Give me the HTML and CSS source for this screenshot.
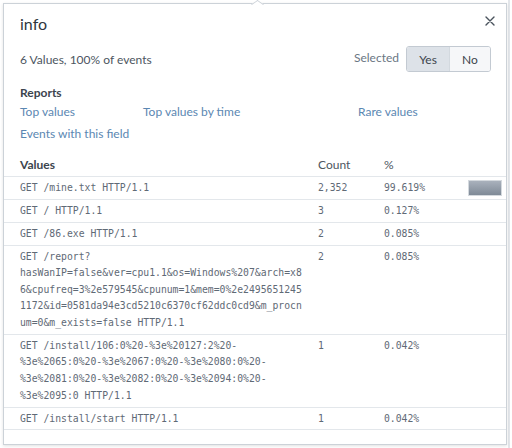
FILE: index.html
```html
<!DOCTYPE html>
<html>
<head>
<meta charset="utf-8">
<title>info</title>
<link rel="stylesheet" href="styles.css">
</head>
<body>
<div class="popover">
  <div class="arrow"></div>
  <div class="head">
    <h3 class="title">info</h3>
    <span class="close" aria-label="Close">
      <svg width="10" height="10" viewBox="0 0 10 10"><path d="M1 1L9 9M9 1L1 9" stroke="#4a535d" stroke-width="1.4" fill="none" stroke-linecap="round"/></svg>
    </span>
  </div>
  <div class="summary">
    <span class="meta">6 Values, 100% of events</span>
    <div class="selected">
      <span class="sel-label">Selected</span>
      <div class="toggle"><span class="opt on">Yes</span><span class="opt">No</span></div>
    </div>
  </div>
  <div class="reports">
    <div class="reports-title">Reports</div>
    <div class="links">
      <a class="link">Top values</a>
      <a class="link">Top values by time</a>
      <a class="link">Rare values</a>
      <a class="link">Events with this field</a>
    </div>
  </div>
  <table class="values">
    <colgroup><col class="c-val"><col class="c-count"><col class="c-pct"><col class="c-bar"></colgroup>
    <thead>
      <tr><th class="h-val">Values</th><th class="h-num">Count</th><th class="h-num">%</th><th></th></tr>
    </thead>
    <tbody>
      <tr><td class="v">GET /mine.txt HTTP/1.1</td><td class="n">2,352</td><td class="n">99.619%</td><td class="b"><div class="bar"></div></td></tr>
      <tr><td class="v">GET / HTTP/1.1</td><td class="n">3</td><td class="n">0.127%</td><td class="b"></td></tr>
      <tr><td class="v">GET /86.exe HTTP/1.1</td><td class="n">2</td><td class="n">0.085%</td><td class="b"></td></tr>
      <tr><td class="v">GET /report?<wbr>hasWanIP=false&amp;ver=cpu1.1&amp;os=Windows%207&amp;arch=x86&amp;cpufreq=3%2e579545&amp;cpunum=1&amp;mem=0%2e24956512451172&amp;id=0581da94e3cd5210c6370cf62ddc0cd9&amp;m_procnum=0&amp;m_exists=false HTTP/1.1</td><td class="n">2</td><td class="n">0.085%</td><td class="b"></td></tr>
      <tr><td class="v">GET /install/106:0%20-%3e%20127:2%20-%3e%2065:0%20-%3e%2067:0%20-%3e%2080:0%20-%3e%2081:0%20-%3e%2082:0%20-%3e%2094:0%20-%3e%2095:0 HTTP/1.1</td><td class="n">1</td><td class="n">0.042%</td><td class="b"></td></tr>
      <tr><td class="v">GET /install/start HTTP/1.1</td><td class="n">1</td><td class="n">0.042%</td><td class="b"></td></tr>
    </tbody>
  </table>
</div>
</body>
</html>
```

FILE: styles.css
```css
html, body {
  margin: 0;
  padding: 0;
}
body {
  width: 512px;
  height: 448px;
  overflow: hidden;
  position: relative;
  background: #ffffff linear-gradient(to right, transparent 508px, #e3e6ea 508px, #e3e6ea 510px, transparent 510px);
  font-family: Lato, "Liberation Sans", sans-serif;
  color: #3c444d;
}
.popover {
  position: absolute;
  left: 3px;
  top: 3px;
  width: 504px;
  height: 442px;
  box-sizing: border-box;
  border: 1px solid #ccd2d8;
  background: #fff;
  box-shadow: 0 1px 3px rgba(0, 0, 0, 0.12);
}
.arrow {
  position: absolute;
  left: 249px;
  top: -4.5px;
  width: 8px;
  height: 8px;
  background: #fff;
  border-left: 1px solid #ccd2d8;
  border-top: 1px solid #ccd2d8;
  transform: scaleY(0.7) rotate(45deg);
}
.head {
  display: flex;
  justify-content: space-between;
  align-items: center;
  padding: 8px 11px 0 16px;
  height: 24px;
}
.title {
  margin: 0;
  font-size: 16px;
  line-height: 24px;
  font-weight: 400;
  color: #2f363d;
}
.close {
  display: flex;
  width: 10px;
  height: 10px;
  margin-top: -6px;
}
.summary {
  display: flex;
  justify-content: space-between;
  align-items: center;
  margin-top: 10px;
  padding: 0 15px 0 16px;
}
.meta {
  font-size: 12px;
  color: #4d5661;
}
.selected {
  display: flex;
  align-items: center;
  gap: 7px;
}
.sel-label {
  font-size: 12px;
  color: #6b7683;
  margin-top: -3px;
}
.toggle {
  display: flex;
  height: 26px;
  box-sizing: border-box;
  border: 1px solid #c3cad2;
  border-radius: 3px;
  overflow: hidden;
}
.opt {
  display: flex;
  align-items: center;
  justify-content: center;
  font-size: 12px;
  color: #3c444d;
  background: #f6f7f9;
  width: 40px;
}
.opt.on {
  width: 42px;
  background: #dde2e8;
  border-right: 1px solid #d3d9df;
}
.reports {
  margin-top: 13px;
  padding: 0 16px;
}
.reports-title {
  font-size: 12px;
  line-height: 16px;
  font-weight: 700;
  color: #3c444d;
}
.links {
  display: grid;
  grid-template-columns: 123px 215px auto;
  row-gap: 6px;
  margin-top: 3px;
}
.link {
  font-size: 12px;
  line-height: 16px;
  color: #5b87b2;
}
.values {
  width: 502px;
  margin-top: 12px;
  border-collapse: collapse;
  table-layout: fixed;
}
.c-val { width: 314px; }
.c-count { width: 66px; }
.c-pct { width: 84px; }
.c-bar { width: 38px; }
.values th, .values td {
  padding: 3px 0 2.3px;
  line-height: 16.6px;
  border-bottom: 1px solid #e3e7eb;
  text-align: left;
  vertical-align: top;
}
.values th {
  font-size: 12px;
  font-weight: 400;
  color: #4d5661;
}
.values th.h-val {
  font-weight: 700;
  color: #3c444d;
  padding-left: 16px;
}
.values td {
  font-family: "DejaVu Sans Mono", "Liberation Mono", monospace;
  font-size: 9.75px;
  color: #5f6a76;
}
.values td.v {
  padding-left: 16px;
  padding-right: 14px;
  overflow-wrap: anywhere;
}
.values td.b {
  padding-right: 5px;
}
.bar {
  width: 34px;
  height: 16px;
  margin-top: 0.5px;
  box-sizing: border-box;
  border: 1px solid #d4d9de;
  background: linear-gradient(to bottom, #a9b1bc, #7f8a97);
}
```
